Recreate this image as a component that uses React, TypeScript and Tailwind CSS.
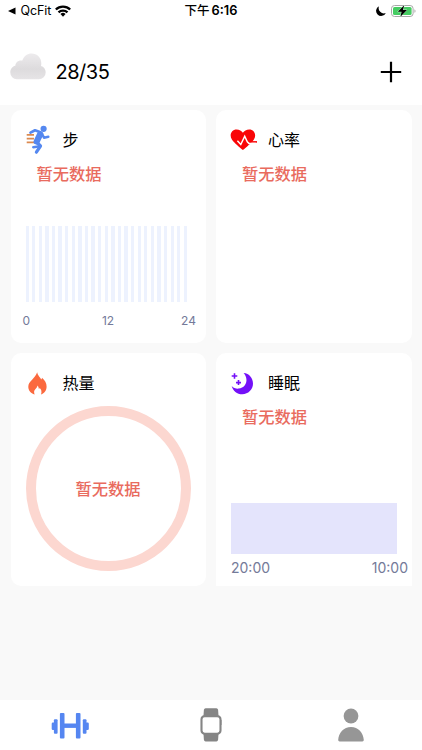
import type { ReactNode } from "react";

const EMPTY = "暂无数据";

function StatusBar() {
	return (
		<div className="grid h-[21px] grid-cols-3 items-center text-[13px] leading-[21px] text-black">
			<div className="flex items-center pl-2">
				<svg width="8" height="8" viewBox="0 0 8 8">
					<path d="M0 4 7.5.4v7.2z" />
				</svg>
				<span className="ml-[4.5px] text-[12.5px] tracking-[-0.1px]">QcFit</span>
				<svg className="ml-[4px]" width="16" height="12" viewBox="0 0 15 11" fill="none" stroke="#000" strokeWidth="2.2">
					<path d="M.8 4.1a9.5 9.5 0 0 1 13.4 0" />
					<path d="M3.3 6.8a6 6 0 0 1 8.4 0" />
					<path d="M7.5 10.8 5.1 8.4a3.4 3.4 0 0 1 4.8 0z" fill="#000" stroke="none" />
				</svg>
			</div>
			<div className="text-center font-semibold whitespace-nowrap">
				<span className="text-[12.5px] font-medium">下午</span>
				<span className="ml-[2px] text-[12.8px]">6:16</span>
			</div>
			<div className="flex items-center justify-end pr-[6px]">
				<svg width="10" height="10" viewBox="0 0 10 10">
					<path d="M3 .2A5.1 5.1 0 1 0 9.8 7 5.3 5.3 0 0 1 3 .2z" />
				</svg>
				<svg className="ml-[5px]" width="25" height="12" viewBox="0 0 25 12">
					<rect x=".5" y=".5" width="21.6" height="11" rx="3" fill="#fff" stroke="#a8a8a8" />
					<rect x="2" y="2" width="18.6" height="8" rx="1.6" fill="#45cc62" />
					<path d="M23.5 4.2c1.3.5 1.3 3.1 0 3.6z" fill="#a0a0a0" />
					<path d="M13.2.3 6.8 6.8h3.8L9.4 11.7l6.6-6.6H12z" fill="#000" stroke="#c8f0d0" strokeWidth="1" paintOrder="stroke" />
				</svg>
			</div>
		</div>
	);
}

function CloudIcon() {
	return (
		<svg width="36" height="27" viewBox="0 0 36 27">
			<defs>
				<linearGradient id="cloud" x1="0" y1="0" x2="0" y2="1">
					<stop offset="0" stopColor="#edebed" />
					<stop offset=".6" stopColor="#dddbdd" />
					<stop offset="1" stopColor="#e6e4e6" />
				</linearGradient>
			</defs>
			<path
				fill="url(#cloud)"
				d="M6.8 26.3A6.8 6.8 0 0 1 .3 19.5c0-3.5 2.2-6 5-6.7C5.5 9 8.8 6.8 12.3 7.6 14 3 17.5.6 21.5.6c5.6 0 9.8 4.2 9.8 9.7 0 1-.1 1.9-.3 2.7 2.8.7 4.7 3.3 4.7 6.3a6.9 6.9 0 0 1-6.9 7z"
			/>
		</svg>
	);
}

function RunnerIcon() {
	return (
		<svg className="ml-[0.5px]" width="24" height="30" viewBox="0 0 24 30" fill="none">
			<path d="M.7 9.8H8M.7 13.6H8M.7 17.4H9" stroke="#dc8a50" strokeWidth="1.7" />
			<circle cx="17.6" cy="3.8" r="3.1" fill="#5588f0" />
			<g stroke="#5588f0" strokeLinecap="round" strokeLinejoin="round">
				<path d="M4.5 7.6 9 5.3l5.500 2" strokeWidth="2.7" />
				<path d="M14.2 9.2 10.7 16.5" strokeWidth="6.2" />
				<path d="m16 9 2 3.7 4.3-.9" strokeWidth="2.5" />
				<path d="m11.5 18 3 3-4.1 6.200" strokeWidth="3.2" />
				<path d="m14 21.3-6.800.9" strokeWidth="2.4" />
			</g>
		</svg>
	);
}

function HeartIcon() {
	return (
		<svg className="-ml-px" width="28" height="22" viewBox="0 0 28 22" fill="none">
			<path
				fill="#f90507"
				d="M12.9 21C9.5 18.5 4.4 14.2 1.9 10.6-1 6 1.4.5 6.6.5c2.7 0 5 1.4 6.3 3.3C14.2 1.9 16.5.5 19.2.5c5.2 0 7.6 5.5 4.7 10.1-2.5 3.6-7.6 7.9-11 10.4z"
			/>
			<path d="M19 12.9h8" stroke="#f90507" strokeWidth="1.6" />
			<path d="m7.4 11.7 3.4 3.8 3.9-8.2 2.6 5.6 1.6 1.5h7" stroke="#fff" strokeWidth="1.5" />
		</svg>
	);
}

function FlameIcon() {
	return (
		<svg className="ml-[2.5px]" width="19" height="23" viewBox="0 0 19 23">
			<path
				fill="#fb693e"
				d="M9.2.3c.5 3.5 2.8 4.4 4 7.3.5-.6.8-1.2.8-1.9 2.9 2.4 4.6 5.5 4.6 8.7 0 3.9-2.2 6.9-5.6 8 1.2-3 .1-5.300-1.400-6.500-.2.600-.4.900-.7 1.100-.2-1.500-.6-2.600-1.300-3.500-.3 2.400-3.500 3.900-3.500 6.500 0 .9.200 1.700.6 2.400C2.6 21.400.3 18.400.3 14.7.3 9.100 6.9 7.200 9.2.3z"
			/>
		</svg>
	);
}

function SleepIcon() {
	return (
		<svg width="23" height="23" viewBox="0 0 23 23" fill="none">
			<path
				fill="#7410f8"
				d="M12.6.9C18.3 1.3 22 6 22 11.5c0 6-4.8 10.7-10.7 10.7C6 22.2 1.8 18.8.7 13.9 2.4 16 5 16.8 7.6 16.6c5.2-.3 8.4-4.5 7.8-9.5-.3-2.7-1.3-4.6-2.8-6.2z"
			/>
			<path d="M3.5 1.2v5.6M.7 4h5.6M7.5 8.1v5M5 10.6h5" stroke="#7410f8" strokeWidth="1.6" />
		</svg>
	);
}

type CardProps = {
	icon: ReactNode;
	title: string;
	className?: string;
	children?: ReactNode;
};

function Card({ icon, title, className = "rounded-[10px]", children }: CardProps) {
	return (
		<section className={`flex h-[233px] flex-col bg-white px-[15px] pt-[15px] ${className}`}>
			<h2 className="flex h-[30px] items-center text-[16px] leading-[30px] text-black">
				<span className="flex w-[37px] shrink-0 items-center">{icon}</span>
				{title}
			</h2>
			{children}
		</section>
	);
}

function EmptyLabel() {
	return <p className="mt-[7px] ml-[11px] text-[16.3px] leading-[24px] font-medium text-[#e96b5e]">{EMPTY}</p>;
}

function Header() {
	return (
		<header className="h-[105px] bg-white">
			<StatusBar />
			<div className="mt-[29px] flex h-[43px] items-center pr-5 pl-[9.5px]">
				<div className="-mt-[10px]">
					<CloudIcon />
				</div>
				<span className="ml-[10px] text-[20px] tracking-[-0.5px] text-black">28/35</span>
				<svg className="ml-auto" width="22" height="22" viewBox="0 0 22 22" stroke="#000" strokeWidth="2.2">
					<path d="M11 .8v20.4M.8 11h20.4" />
				</svg>
			</div>
		</header>
	);
}

function TabBar() {
	return (
		<nav className="mt-auto grid h-[50px] grid-cols-3 justify-items-center bg-white">
			<a href="#" className="pt-[12px]">
				<svg width="38" height="28" viewBox="0 0 38 28" fill="#5586f1">
					<rect x="8.9" y="1" width="4.6" height="25.5" rx="1" />
					<rect x="24.900" y="1" width="4.6" height="25.5" rx="1" />
					<rect x="12.4" y="11.500" width="14" height="4.4" />
					<rect x="2.9" y="7.2" width="3.7" height="14.6" rx="1" />
					<rect x="31.8" y="7.2" width="3.7" height="14.6" rx="1" />
					<rect x=".7" y="10.5" width="3.5" height="7.4" rx="1.2" />
					<rect x="34.3" y="10.5" width="3.5" height="7.4" rx="1.2" />
				</svg>
			</a>
			<a href="#" className="pt-[8px]">
				<svg width="22" height="34" viewBox="0 0 22 34">
					<path
						d="M5.6.3h10.8q1.4 0 1.7 1.5l.4 5.7H3.5l.4-5.7Q4.2.3 5.6.3zM3.5 26h15l-.4 5.7q-.3 1.7-1.7 1.7H5.6q-1.4 0-1.7-1.7z"
						fill="#858585"
					/>
					<rect x="1.5" y="8.1" width="19" height="17.7" rx="3.2" fill="#fff" stroke="#858585" strokeWidth="2.1" />
					<path d="M20.5 12h1v5h-1z" fill="#858585" />
				</svg>
			</a>
			<a href="#" className="pt-[8px] pr-px">
				<svg width="26" height="34" viewBox="0 0 26 34" fill="#969696">
					<circle cx="13" cy="8" r="7.4" />
					<path d="M.2 32.1C.5 24.7 5.8 19 13 19s12.5 5.7 12.8 13.1q0 1.3-1.4 1.3H1.6Q.2 33.4.2 32.1z" />
				</svg>
			</a>
		</nav>
	);
}

export default function App() {
	return (
		<div className="flex h-[750px] w-[422px] flex-col overflow-hidden bg-[#f9f9f9] font-[Inter,'Noto_Sans_CJK_SC',sans-serif]">
			<Header />
			<main className="grid grid-cols-2 gap-[10px] px-[10.5px] pt-[5.4px]">
				<Card icon={<RunnerIcon />} title="步">
					<EmptyLabel />
					<div className="mt-[39.4px] flex h-[76px] shrink-0 gap-[3.3px]">
						{Array.from({ length: 25 }, (_, i) => (
							<span key={i} className="w-[3.3px] shrink-0 bg-[#edf2fe]" />
						))}
					</div>
					<div className="mt-[10px] -mr-[5px] -ml-[3px] flex justify-between text-[12px] leading-[18px] text-[#747a99]">
						<span>0</span>
						<span className="ml-[5px]">12</span>
						<span>24</span>
					</div>
				</Card>
				<Card icon={<HeartIcon />} title="心率">
					<EmptyLabel />
				</Card>
				<Card icon={<FlameIcon />} title="热量">
					<div className="mt-[8px] flex size-[165px] shrink-0 items-center justify-center rounded-full border-[10px] border-[#fcd7d0]">
						<span className="text-[16.3px] font-medium text-[#e96b5e]">{EMPTY}</span>
					</div>
				</Card>
				<Card icon={<SleepIcon />} title="睡眠" className="rounded-t-[10px]">
					<EmptyLabel />
					<div className="mt-[73.5px] h-[51px] shrink-0 bg-[#e4e4fc]" />
					<div className="mt-[5px] -mr-[11.5px] flex justify-between text-[14px] leading-[18px] text-[#747a99]">
						<span>20:00</span>
						<span>10:00</span>
					</div>
				</Card>
			</main>
			<TabBar />
		</div>
	);
}
